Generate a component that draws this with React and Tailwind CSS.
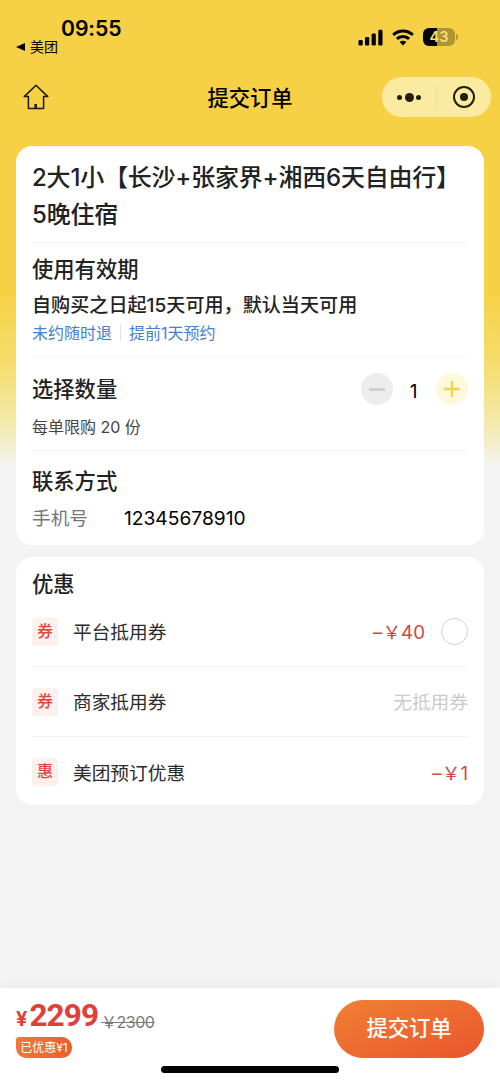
import clsx from "clsx";

const COUPONS = [
  { id: "platform", tag: "券", name: "平台抵用券", amount: "–￥40", selectable: true },
  { id: "shop", tag: "券", name: "商家抵用券", amount: null },
  { id: "preorder", tag: "惠", name: "美团预订优惠", amount: "–￥1" },
];

function StatusBar() {
  return (
    <div className="h-[60px] flex justify-between pl-4 pr-[42px] pt-4">
      <div>
        <div className="pl-[45px] text-[21.2px] leading-6 font-semibold tracking-[-0.1px] text-black">09:55</div>
        <div className="flex items-center gap-[5px] text-[14px] leading-[14px] text-black">
          <svg width="9" height="8" viewBox="0 0 9 8"><path d="M0 4 9 0v8z" /></svg>
          美团
        </div>
      </div>
      <div className="flex items-center h-[42px] gap-[9px]">
        <svg width="26" height="17" viewBox="0 0 26 17">
          <rect x="1.5" y="11" width="4.2" height="5.5" rx="1.3" />
          <rect x="8" y="8" width="4.2" height="8.5" rx="1.3" />
          <rect x="14.6" y="4.5" width="4.2" height="12" rx="1.3" />
          <rect x="21.3" y="0.8" width="4.2" height="15.7" rx="1.3" />
        </svg>
        <svg width="22" height="17" viewBox="0 0 22 17" fill="none" stroke="#000" strokeWidth="3">
          <path d="M1.2 5.9a14 14 0 0 1 19.6 0" />
          <path d="M4.9 9.9a8.8 8.8 0 0 1 12.2 0" />
          <path d="M11 16.5 7.6 13.1a4.9 4.9 0 0 1 6.8 0z" fill="#000" stroke="none" />
        </svg>
        <div className="flex items-center gap-px">
          <div className="w-8 h-[18px] rounded-[6px] bg-[linear-gradient(90deg,#000_43%,#af952f_43%)] text-center text-[14.5px] leading-[18px] font-semibold text-[#f6e07a]">
            43
          </div>
          <div className="w-[2px] h-[6px] rounded-r-full bg-[#b59a31]" />
        </div>
      </div>
    </div>
  );
}

function NavBar() {
  return (
    <div className="h-[74px] grid grid-cols-[1fr_auto_1fr] items-center px-[9px]">
      <svg className="ml-3.5" width="26" height="26" viewBox="0 0 26 26" fill="none" stroke="#1f1905" strokeWidth="1.5" strokeLinejoin="round">
        <path d="M13 1.2 1.2 12.6h4.2v11.8h15.2V12.6h4.2z" />
        <path d="M12.7 20v4.4" strokeWidth="2.6" />
      </svg>
      <h1 className="pt-[3px] text-[21.3px] font-medium text-black">提交订单</h1>
      <div className="justify-self-end flex items-center w-[109px] h-10 rounded-full bg-[#fbeba1]">
        <div className="flex-1 flex items-center justify-center gap-[2.5px]">
          <span className="size-[5px] rounded-full bg-[#241f0d]" />
          <span className="size-[9px] rounded-full bg-[#241f0d]" />
          <span className="size-[5px] rounded-full bg-[#241f0d]" />
        </div>
        <div className="w-px h-6 bg-[#f3e193]" />
        <div className="flex-1 flex justify-center">
          <div className="size-[22px] rounded-full border-[2.6px] border-[#241f0d] flex items-center justify-center">
            <span className="size-2 rounded-full bg-[#241f0d]" />
          </div>
        </div>
      </div>
    </div>
  );
}

function SectionTitle({ children }) {
  return <h2 className="text-[21.3px] leading-[30px] font-medium">{children}</h2>;
}

function Stepper({ value }) {
  return (
    <div className="flex items-center">
      <button className="size-8 rounded-full bg-[#ededed] flex items-center justify-center">
        <span className="w-4 h-[3px] bg-[#cfcfcf]" />
      </button>
      <span className="w-[43px] pt-1.5 pr-0.5 text-center text-[19px] leading-6 text-black">{value}</span>
      <button className="size-8 rounded-full bg-[#fef9dc] flex items-center justify-center">
        <svg width="16" height="16" viewBox="0 0 16 16" stroke="#f3d34c" strokeWidth="2.4">
          <path d="M0 8h16M8 0v16" />
        </svg>
      </button>
    </div>
  );
}

function OrderCard() {
  return (
    <section className="h-[399px] rounded-2xl bg-white px-4 divide-y divide-[#f3f3f3]">
      <div className="h-[97px] pt-[13px] text-[24px] leading-[37px] font-medium tracking-[-0.2px] whitespace-nowrap">
        2大1小【长沙+张家界+湘西6天自由行】
        <br />
        5晚住宿
      </div>
      <div className="h-[114px] pt-[11px]">
        <SectionTitle>使用有效期</SectionTitle>
        <p className="mt-[7px] text-[19.1px] leading-7 font-medium whitespace-nowrap">
          自购买之日起15天可用，默认当天可用
        </p>
        <div className="flex items-center text-[16px] leading-7 text-[#4581d0]">
          <span>未约随时退</span>
          <span className="mx-2 w-px h-4 bg-[#dfe3e8]" />
          <span>提前1天预约</span>
        </div>
      </div>
      <div className="h-[94px] pt-4">
        <div className="flex items-center justify-between">
          <SectionTitle>选择数量</SectionTitle>
          <Stepper value={1} />
        </div>
        <p className="mt-2.5 text-[16px] leading-6 text-[#444]">每单限购 20 份</p>
      </div>
      <div className="pt-[15px]">
        <SectionTitle>联系方式</SectionTitle>
        <div className="mt-2 flex text-[18.7px] leading-7">
          <span className="w-[92px] pt-px text-[#777]">手机号</span>
          <span className="text-[19.2px] text-black">12345678910</span>
        </div>
      </div>
    </section>
  );
}

function CouponRow({ tag, name, amount, selectable }) {
  return (
    <li className="h-[70px] flex items-center text-[18.7px]">
      <span className="w-[26px] h-7 rounded-[3px] bg-[#fdf0ed] text-center text-[16px] leading-[27px] font-medium text-[#e2453f]">
        {tag}
      </span>
      <span className="ml-[15px] flex-1 pt-1 text-[#2b2b2b]">{name}</span>
      <span className={clsx("pt-1", amount ? "text-[#d8463f]" : "text-[#cbcbcb]")}>{amount ?? "无抵用券"}</span>
      {selectable && <span className="ml-4 size-[27px] rounded-full border-[1.5px] border-[#d0d0d0]" />}
    </li>
  );
}

function DiscountCard() {
  return (
    <section className="mt-3 h-[248px] rounded-2xl bg-white px-4 pt-3">
      <SectionTitle>优惠</SectionTitle>
      <ul className="-mt-[2px] divide-y divide-[#f3f3f3]">
        {COUPONS.map((c) => (
          <CouponRow key={c.id} {...c} />
        ))}
      </ul>
    </section>
  );
}

function BottomBar() {
  return (
    <footer className="mt-auto h-[95px] bg-white shadow-[0_-2px_8px_rgba(0,0,0,0.04)] flex flex-col">
      <div className="h-[78px] flex justify-between px-4 pt-3">
        <div>
          <div className="flex items-baseline h-[37px] whitespace-nowrap">
            <span className="text-[20px] leading-8 font-bold text-[#e0403a]">¥</span>
            <span className="ml-[2px] font-[Roboto] text-[31.5px] leading-8 font-bold tracking-[-0.9px] text-[#e0403a]">2299</span>
            <span className="ml-[3px] relative top-[2px] text-[16px] tracking-[-0.5px] line-through text-[#777]">￥2300</span>
          </div>
          <div className="w-14 h-[21px] rounded-[10px] rounded-tl-[3px] bg-linear-to-r from-[#ed7a36] to-[#e95f2f] text-center text-[12px] leading-[21px] text-white whitespace-nowrap">
            已优惠¥1
          </div>
        </div>
        <button className="w-[150px] h-[58px] rounded-full bg-linear-to-br from-[#ef8033] to-[#ea542d] text-[21.3px] font-medium text-white">
          提交订单
        </button>
      </div>
      <div className="mx-auto w-[178px] h-[7px] rounded-full bg-black" />
    </footer>
  );
}

export default function App() {
  return (
    <div className="w-[500px] h-[1083px] flex flex-col overflow-hidden font-[Inter,'Noto_Sans_CJK_SC',sans-serif] text-[#222] bg-[linear-gradient(180deg,#f6d145_0px,#f6d145_290px,#f5dc6b_360px,#f3e9a8_420px,#f3f3f3_468px)]">
      <StatusBar />
      <NavBar />
      <main className="px-4 pt-3">
        <OrderCard />
        <DiscountCard />
      </main>
      <BottomBar />
    </div>
  );
}
